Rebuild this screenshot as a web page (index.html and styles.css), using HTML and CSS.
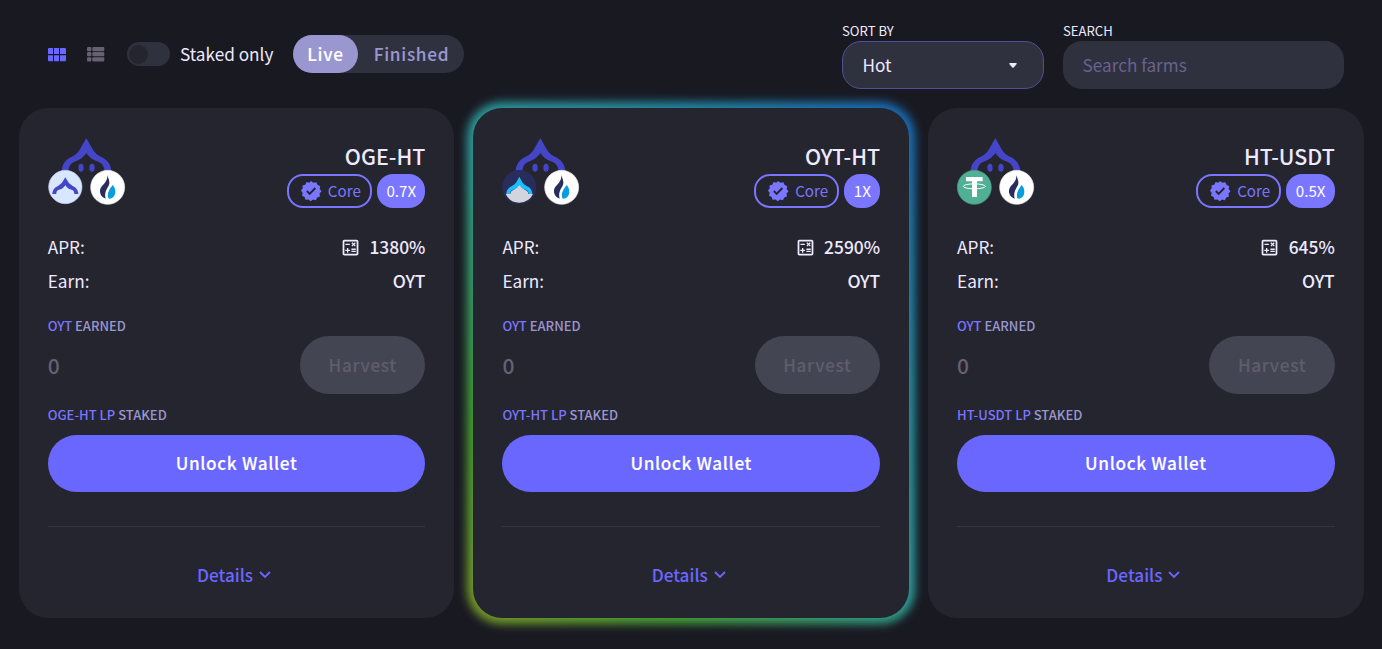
FILE: index.html
```
<!DOCTYPE html>
<html lang="en">
<head>
<meta charset="utf-8">
<title>Farms</title>
<link rel="stylesheet" href="styles.css">
</head>
<body>
<svg class="defs" aria-hidden="true">
  <symbol id="arch" viewBox="21 24 240 204">
    <path fill="#4545c8" d="M62 130C61 103 74 88 95 79C115 70 120 50 136 25C152 50 157 70 177 79C198 88 212 103 211 130H191C191 107 182 99 168 94C152 88 145 81 136 69C127 81 120 88 104 94C90 99 82 107 82 130Z"/>
    <ellipse cx="120" cy="113" rx="8" ry="12" fill="#4545c8"/><ellipse cx="153" cy="113" rx="8" ry="12" fill="#4545c8"/>
    <circle cx="200" cy="172" r="51" fill="#fff" stroke="#e4e4e8" stroke-width="2"/>
    <path fill="#282d5c" d="M199 135C203 149 209 157 202 169C195 181 190 190 194 206C184 203 176 194 177 181C179 164 201 160 199 135Z"/>
    <path fill="#089de0" d="M215 165C226 176 226 197 213 204Q207 208 202 205C197 188 207 176 215 165Z"/>
  </symbol>
  <symbol id="verified" viewBox="0 0 24 24"><path fill="currentColor" fill-rule="evenodd" d="M12 1L14.6 3.1L17.8 2.4L19 5.3L22 6.7L21.5 9.8L23.5 12.2L21.3 14.8L21.8 18L18.8 19L17.3 22L14.2 21.3L11.7 23.2L9.3 21.2L6 21.6L5.1 18.6L2.2 17.1L2.9 14L1 11.5L3 9.1L2.7 5.9L5.7 5.1L7.2 2.3L10.2 3ZM10.5 16.5L17.5 9.5L16 8L10.5 13.5L8.2 11.2L6.8 12.7Z"/></symbol>
  <symbol id="calc" viewBox="0 0 24 24"><path fill="currentColor" d="M19 3H5c-1.1 0-2 .9-2 2v14c0 1.1.9 2 2 2h14c1.1 0 2-.9 2-2V5c0-1.1-.9-2-2-2zm0 16H5V5h14v14zM6.25 7.72h5v1.5h-5zM13 15.75h5v1.5h-5zM13 13.25h5v1.5h-5zM8 18h1.5v-2h2v-1.5h-2v-2H8v2H6V16h2zM14.09 10.95l1.41-1.41 1.41 1.41 1.06-1.06-1.41-1.42 1.41-1.41L16.91 6 15.5 7.41 14.09 6l-1.06 1.06 1.41 1.41-1.41 1.42z"/></symbol>
  <symbol id="chevron" viewBox="0 0 12 8"><path fill="none" stroke="currentColor" stroke-width="1.8" d="M1 1L6 6L11 1"/></symbol>
</svg>

<header class="toolbar">
  <div class="filters">
    <svg class="view view-grid" viewBox="0 0 18 14"><path fill="currentColor" d="M1 0H5V6H0V1Q0 0 1 0ZM6 0H11V6H6ZM12 0H17Q18 0 18 1V6H12ZM0 7.3H5V13.3H1Q0 13.3 0 12.3ZM6 7.3H11V13.3H6ZM12 7.3H18V12.3Q18 13.3 17 13.3H12Z"/></svg>
    <svg class="view view-list" viewBox="0 0 18 15"><g fill="currentColor"><rect width="4.4" height="4.2" rx="1"/><rect y="5.1" width="4.4" height="4.2" rx="1"/><rect y="10.2" width="4.4" height="4.2" rx="1"/><rect x="5.3" width="12" height="4.2" rx="1"/><rect x="5.3" y="5.1" width="12" height="4.2" rx="1"/><rect x="5.3" y="10.2" width="12" height="4.2" rx="1"/></g></svg>
    <div class="toggle"><span class="knob"></span></div>
    <span class="toggle-label">Staked only</span>
    <div class="tabs"><span class="tab active">Live</span><span class="tab">Finished</span></div>
  </div>
  <div class="controls">
    <div class="field sort"><label>SORT BY</label><div class="select"><span>Hot</span><svg class="caret" viewBox="0 0 8 5"><path fill="currentColor" d="M1 0H7Q8.3 .5 7.3 1.6L4.7 4.4Q4 5 3.3 4.4L.7 1.6Q-.3 .5 1 0Z"/></svg></div></div>
    <div class="field search"><label>SEARCH</label><div class="input">Search farms</div></div>
  </div>
</header>

<main class="cards">
  <article class="card">
    <div class="head">
      <svg class="pair" viewBox="21 24 240 204"><use href="#arch" x="21" y="24" width="240" height="204"/>
        <circle cx="73" cy="171" r="50" fill="#d8e6ff" stroke="#c0cce6" stroke-width="2"/>
        <path fill="#4545c8" d="M34 192C35 177 42 172 52 167C63 161 65 155 73 142C81 155 83 161 94 167C104 172 111 177 112 192H100C100 181 94 180 87 178C80 175 77 171 73 166C69 171 66 175 59 178C52 180 46 181 46 192Z"/></svg>
      <div class="info"><h2>OGE-HT</h2><div class="tags"><span class="tag core"><svg><use href="#verified"/></svg>Core</span><span class="tag multi">0.7X</span></div></div>
    </div>
    <div class="stats"><div class="row"><span>APR:</span><b><svg><use href="#calc"/></svg>1380%</b></div><div class="row"><span>Earn:</span><b>OYT</b></div></div>
    <div class="caption earned"><em>OYT</em> EARNED</div>
    <div class="harvest"><span class="zero">0</span><button class="btn disabled">Harvest</button></div>
    <div class="caption staked"><em>OGE-HT LP</em> STAKED</div>
    <button class="btn unlock">Unlock Wallet</button>
    <div class="details">Details<svg><use href="#chevron"/></svg></div>
  </article>

  <div class="glow"><article class="card">
    <div class="head">
      <svg class="pair" viewBox="21 24 240 204"><use href="#arch" x="21" y="24" width="240" height="204"/>
        <circle cx="73" cy="171" r="51" fill="#282d5c"/>
        <path fill="#d4d4dc" d="M32 192H46Q46 183 59 178L73 164L87 178Q100 183 100 192H114Q102 217 73 218Q44 217 32 192Z"/>
        <path fill="#1cbfff" d="M34 192C35 177 42 172 52 167C63 161 65 155 73 140C81 155 83 161 94 167C104 172 111 177 112 192H101C100 181 94 180 87 178C80 175 77 171 73 164C69 171 66 175 59 178C52 180 46 181 45 192Z"/></svg>
      <div class="info"><h2>OYT-HT</h2><div class="tags"><span class="tag core"><svg><use href="#verified"/></svg>Core</span><span class="tag multi">1X</span></div></div>
    </div>
    <div class="stats"><div class="row"><span>APR:</span><b><svg><use href="#calc"/></svg>2590%</b></div><div class="row"><span>Earn:</span><b>OYT</b></div></div>
    <div class="caption earned"><em>OYT</em> EARNED</div>
    <div class="harvest"><span class="zero">0</span><button class="btn disabled">Harvest</button></div>
    <div class="caption staked"><em>OYT-HT LP</em> STAKED</div>
    <button class="btn unlock">Unlock Wallet</button>
    <div class="details">Details<svg><use href="#chevron"/></svg></div>
  </article></div>

  <article class="card">
    <div class="head">
      <svg class="pair" viewBox="21 24 240 204"><use href="#arch" x="21" y="24" width="240" height="204"/>
        <circle cx="73" cy="172" r="51" fill="#50af95" stroke="#489b85" stroke-width="2"/>
        <path fill="#fff" d="M48 141H98V154H81V201H66V154H48Z"/>
        <ellipse cx="73" cy="169" rx="33" ry="7.5" fill="none" stroke="#fff" stroke-width="3"/></svg>
      <div class="info"><h2>HT-USDT</h2><div class="tags"><span class="tag core"><svg><use href="#verified"/></svg>Core</span><span class="tag multi">0.5X</span></div></div>
    </div>
    <div class="stats"><div class="row"><span>APR:</span><b><svg><use href="#calc"/></svg>645%</b></div><div class="row"><span>Earn:</span><b>OYT</b></div></div>
    <div class="caption earned"><em>OYT</em> EARNED</div>
    <div class="harvest"><span class="zero">0</span><button class="btn disabled">Harvest</button></div>
    <div class="caption staked"><em>HT-USDT LP</em> STAKED</div>
    <button class="btn unlock">Unlock Wallet</button>
    <div class="details">Details<svg><use href="#chevron"/></svg></div>
  </article>
</main>
</body>
</html>
```
FILE: styles.css
```
* { box-sizing: border-box; }
body {
  margin: 0;
  height: 649px;
  overflow: hidden;
  background: #191922;
  color: #eeeaff;
  font: 400 17.2px/24px "Noto Sans CJK JP", "Noto Sans CJK SC", sans-serif;
}
.defs { display: none; }
svg { flex: none; }

.toolbar { display: flex; justify-content: space-between; height: 108px; padding: 0 38px 0 48px; }
.filters { display: flex; align-items: center; height: 38px; margin-top: 35px; }
.view-grid { width: 18px; height: 14px; margin-top: 1px; margin-left: .4px; color: #6a67ff; }
.view-list { width: 18px; height: 15px; margin-left: 21px; color: #666171; }
.toggle { width: 43px; height: 24px; margin-left: 21.6px; padding: 2.5px; border-radius: 12px; background: #30313e; }
.knob { display: block; width: 19px; height: 19px; border-radius: 50%; background: #252530; }
.toggle-label { width: 113px; margin-left: 10px; white-space: nowrap; }
.tabs { display: flex; width: 171px; height: 38px; border-radius: 19px; background: #30313e; }
.tab { flex: 1; padding-left: 1px; text-align: center; line-height: 37px; font-size: 17.2px; font-weight: 500; letter-spacing: .7px; color: #9a96cf; -webkit-text-stroke: .12px currentColor; }
.tab.active { flex: none; width: 65px; padding-left: 0; border-radius: 19px; background: #9a96cf; color: #fff; }

.controls { display: flex; gap: 19px; padding-top: 20px; }
.field label { display: block; height: 21px; font-size: 13.1px; line-height: 22px; }
.sort { width: 202px; }
.search { width: 281px; }
.select, .input { display: flex; align-items: center; justify-content: space-between; height: 48px; padding: 0 19.5px; border-radius: 19px; background: #30313e; }
.select { padding-right: 26px; border: 1px solid #524e99; }
.caret { width: 8px; height: 5px; }
.input { color: #666290; }

.cards { display: grid; grid-template-columns: repeat(3, 435.7px); gap: 19px; padding-left: 18.7px; }
.card { position: relative; height: 510px; padding: 30px 29px 0; border-radius: 29px; background: #252530; }
.glow { position: relative; z-index: 0; }
.glow::before {
  content: "";
  position: absolute;
  inset: -6px;
  z-index: -1;
  border-radius: 35px;
  background: linear-gradient(45deg, #7d9c28 0%, #44a035 22%, #2f9c98 48%, #268fa0 70%, #176bb8 100%);
  filter: blur(5px);
}
.head { display: flex; justify-content: space-between; height: 70px; }
.pair { width: 80px; height: 68px; }
.info { padding-top: 4px; }
h2 { margin: 0; font-size: 21.4px; font-weight: 500; line-height: 28px; text-align: right; }
.tags { display: flex; justify-content: flex-end; gap: 5px; margin-top: 4px; }
.tag { display: flex; align-items: center; height: 34px; border-radius: 16px; font-size: 15.2px; padding-bottom: 1.5px; }
.core { width: 85px; padding-left: 11px; border: 2px solid #7a76ff; color: #7a76ff; }
.core svg { width: 22px; height: 22px; margin: 1px 6px 0 0; }
.multi { padding-left: 9.6px; padding-right: 9.2px; background: #7a76ff; color: #fff; }
.stats { margin-top: 22px; }
.row { display: flex; justify-content: space-between; line-height: 34px; }
.row b { display: flex; align-items: center; font-size: 17.4px; font-weight: 500; }
.row svg { width: 21px; height: 21px; margin-right: 8.5px; }
.caption { font-size: 13px; font-weight: 500; color: #9a96cf; }
.caption em { font-style: normal; color: #7a76ff; }
.earned { padding-top: 17px; line-height: 21px; }
.harvest { display: flex; justify-content: space-between; align-items: center; height: 58px; }
.zero { color: #666171; font-size: 21px; font-weight: 500; }
.btn { border: 0; border-radius: 29px; font: 500 17.2px/24px "Noto Sans CJK JP", sans-serif; letter-spacing: .65px; text-align: center; -webkit-text-stroke: .12px currentColor; }
.disabled { width: 125.5px; height: 58px; background: #444552; color: #5f5d6d; }
.staked { line-height: 41px; }
.unlock { display: block; width: 100%; height: 57px; padding-bottom: 2px; background: #6a67ff; color: #fff; }
.details { display: flex; justify-content: center; align-items: center; height: 97px; margin-top: 34px; padding-right: 5px; border-top: 1px solid #353641; color: #6a67ff; font-weight: 500; }
.details svg { width: 12px; height: 8px; margin-left: 6px; }
```
